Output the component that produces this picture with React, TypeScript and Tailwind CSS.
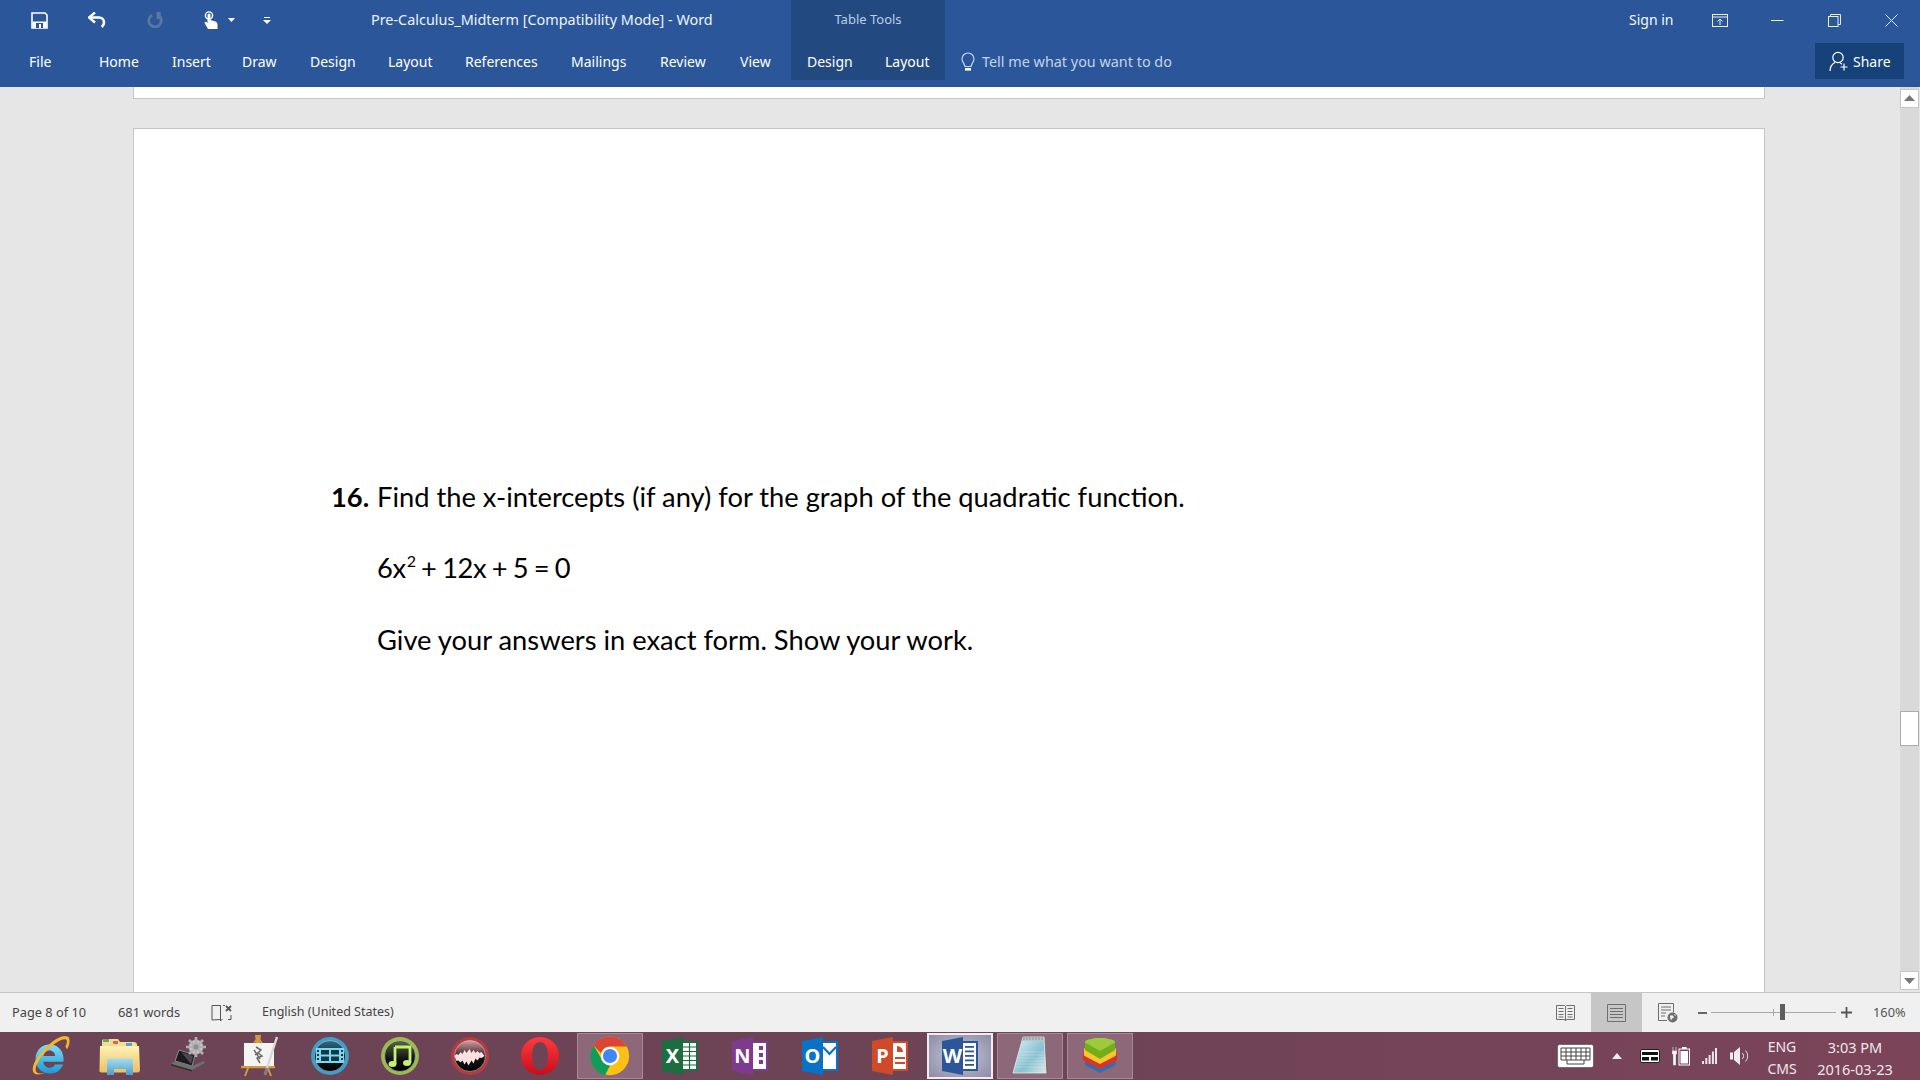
import React from "react";

const ui = "font-['Noto_Sans','Open_Sans',sans-serif]";

function SaveIcon() {
  return (
    <svg width="17" height="17" viewBox="0 0 17 17">
      <path d="M1 1h13l2 2v13H1z" fill="none" stroke="#fff" strokeWidth="1.6" />
      <rect x="1.500" y="9.500" width="14" height="6" fill="#fff" />
      <rect x="5" y="11" width="7" height="5" fill="#2b579a" />
      <rect x="8" y="12" width="2" height="4" fill="#fff" />
    </svg>
  );
}
function UndoIcon({ color = "#fff" }: { color?: string }) {
  return (
    <svg width="18" height="16" viewBox="0 0 18 16">
      <path d="M1.500 5.500H11a5 5 0 0 1 5 5c0 2-1 3.400-2.200 4.500" fill="none" stroke={color} strokeWidth="2.600" />
      <path d="M7 0.500 1 5.500l6 5" fill="none" stroke={color} strokeWidth="2.400" />
    </svg>
  );
}
function RedoIcon() {
  return (
    <svg width="17" height="16" viewBox="0 0 17 16">
      <path d="M5 3.200a6.200 6.200 0 1 0 6.500.3" fill="none" stroke="#58789f" strokeWidth="2.800" />
      <path d="M9.600 0v7h4V0z" fill="#58789f" />
    </svg>
  );
}
function TouchIcon() {
  return (
    <svg width="14" height="18" viewBox="0 0 14 18">
      <circle cx="5" cy="4.500" r="3.600" fill="none" stroke="#fff" strokeWidth="1.400" />
      <path d="M3.500 4a1.500 1.500 0 0 1 3 0v5l5 1.600c1.200.6 2 1.500 2 3V18H4L0.800 12.500c-.6-1.200.8-2.200 1.800-1.300l.9 1z" fill="#fff" />
    </svg>
  );
}

function BulbIcon() {
  return (
    <svg width="14" height="20" viewBox="0 0 14 20">
      <path d="M7 1a6 6 0 0 0-6 6c0 3 2.400 4.200 3 7.500h6c.6-3.300 3-4.500 3-7.500a6 6 0 0 0-6-6z" fill="none" stroke="#cfdcef" strokeWidth="1.100" />
      <rect x="4" y="16" width="6" height="2.600" fill="#fff" />
    </svg>
  );
}
function RibbonDisplayIcon() {
  return (
    <svg width="16" height="13" viewBox="0 0 16 13">
      <rect x="0.500" y="0.500" width="15" height="12" fill="none" stroke="#e8eef7" />
      <path d="M1 3h14" stroke="#e8eef7" />
      <path d="M8 11V5M5.500 7.500 8 5l2.500 2.500" fill="none" stroke="#e8eef7" />
    </svg>
  );
}
function WindowIcons() {
  return (
    <div className="flex items-center">
      <div className="w-[57px] flex justify-start">
        <svg width="13" height="13" viewBox="0 0 13 13"><path d="M0 6.500h12.500" stroke="#e8eef7" /></svg>
      </div>
      <div className="w-[57px] flex justify-start">
        <svg width="13" height="13" viewBox="0 0 13 13">
          <rect x="0.500" y="2.500" width="9.500" height="10" fill="none" stroke="#e8eef7" />
          <path d="M2.500 2.500v-2h10v10h-2.500" fill="none" stroke="#e8eef7" />
        </svg>
      </div>
      <div className="w-[36px] flex justify-start">
        <svg width="13" height="13" viewBox="0 0 13 13"><path d="M0.500 0.500l12 12M12.500 0.500l-12 12" stroke="#e8eef7" /></svg>
      </div>
    </div>
  );
}
function ShareIcon() {
  return (
    <svg width="20" height="20" viewBox="0 0 20 20">
      <circle cx="9" cy="6.500" r="5.200" fill="none" stroke="#fff" strokeWidth="1.200" />
      <path d="M1 20c0-4.500 2.400-7.300 5.200-8.800M11 12c.6.3 1.300.7 1.900 1.200" fill="none" stroke="#fff" strokeWidth="1.200" />
      <path d="M15 12.500v7M11.500 16h7" stroke="#fff" strokeWidth="1.200" />
    </svg>
  );
}

function IE() {
  return (
    <svg width="42" height="42" viewBox="0 0 42 42">
      <defs>
        <linearGradient id="ieb" x1="0" y1="0" x2="0" y2="1">
          <stop offset="0" stopColor="#7fdcf8" />
          <stop offset="1" stopColor="#1b9ad6" />
        </linearGradient>
      </defs>
      <path d="M21 9.500c-8.500 0-14.500 6-14.500 14.500S12.800 38.500 21 38.500c6.400 0 11-3.300 13-9H26c-1.200 2.300-3 3.300-5.200 3.300-3.700 0-6.200-2.400-6.500-6H34.500c.9-9.800-4.700-17.300-13.500-17.300zM14.500 21c.5-3.400 3-5.600 6-5.600 3.300 0 5.400 2.200 5.700 5.600z" fill="url(#ieb)" />
      <path d="M38 1.500c-3-1.800-10 .8-18 8C9 19 1 32 4.500 37.500 6 40 10.500 40.200 16 37.800 11 39 8 38.600 7 36.500 5 31.500 12 20.500 21 12.500c7-6.200 13.500-9.400 16-8 1.500 1 1 3.500-.5 7l1.500 3c3-5 3.400-11 1-13z" fill="#f1b92c" />
    </svg>
  );
}
function Folder() {
  return (
    <svg width="42" height="40" viewBox="0 0 42 40">
      <defs>
        <linearGradient id="fold" x1="0" y1="0" x2="0" y2="1">
          <stop offset="0" stopColor="#fff1b4" />
          <stop offset="1" stopColor="#e8c163" />
        </linearGradient>
        <linearGradient id="foldb" x1="0" y1="0" x2="0" y2="1">
          <stop offset="0" stopColor="#a6dcf0" />
          <stop offset="1" stopColor="#4e9fcf" />
        </linearGradient>
      </defs>
      <path d="M3 5c0-1 .8-2 2-2h14l2 3h14c1.500 0 3 1 3 2.500V34H3z" fill="#f5dc92" />
      <rect x="4" y="3" width="6" height="3" fill="#5cb05c" />
      <rect x="14" y="5" width="5" height="3" fill="#d96a4a" />
      <rect x="27" y="7" width="6" height="3" fill="#5aa0d8" />
      <path d="M1 10h39l1 24c0 1.500-1 2.500-2.500 2.500h-36C1 36.500 0 35.500 0.500 34z" fill="url(#fold)" />
      <path d="M8 25c0-1.500 1-2.500 2.500-2.500h21c1.500 0 2.500 1 2.500 2.500v14H27v-6H15v6H8z" fill="url(#foldb)" />
    </svg>
  );
}
function Laptop() {
  return (
    <svg width="40" height="38" viewBox="0 0 40 38">
      <path d="M9 13 25 18l-3 11L5 24z" fill="#1c1c1f" stroke="#8a8a8a" />
      <path d="M11 15l12 4-2 8z" fill="#4a4a55" />
      <path d="M5 24 22 29l12-5 1 2-13 7L1 27z" fill="#707070" />
      <path d="M1 27l21 6v1.500L1 28.500z" fill="#2e2e2e" />
      <g fill="#c9c9c9" stroke="#b0b0b0">
        <circle cx="26" cy="10" r="7" />
        <path d="M26 0v20M16 10h20M19 3l14 14M33 3 19 17" strokeWidth="2.600" />
      </g>
      <circle cx="26" cy="10" r="2.500" fill="#8f8f8f" />
    </svg>
  );
}
function Easel() {
  return (
    <svg width="40" height="42" viewBox="0 0 40 42">
      <path d="M16 0h4l-1 8h-2zM10 28 5 41M26 28l5 13" stroke="#d39a3e" strokeWidth="2" fill="#d39a3e" />
      <path d="M18 3 14 8M18 3l4 5" stroke="#d39a3e" strokeWidth="1.800" fill="none" />
      <path d="M1 32h34" stroke="#d39a3e" strokeWidth="2.500" />
      <rect x="4" y="8" width="30" height="23" fill="#f4f4f2" />
      <path d="M16 12l5 3-3 3 4 3-5 2 3 5M14 15l6 9M15 20l4-3" stroke="#6a6a6a" strokeWidth="1.500" fill="none" />
      <path d="M37 2 26 36" stroke="#d8d8d8" strokeWidth="2.400" />
      <path d="M27 33l-2 7" stroke="#80808a" strokeWidth="3" />
    </svg>
  );
}
function Orb({ ring, top, id, children }: { ring: string; top: string; id: string; children: React.ReactNode }) {
  return (
    <svg width="40" height="40" viewBox="0 0 40 40">
      <defs>
        <linearGradient id={id} x1="0" y1="0" x2="0" y2="1">
          <stop offset="0" stopColor={top} />
          <stop offset="0.6" stopColor="#101214" />
          <stop offset="1" stopColor="#030303" />
        </linearGradient>
      </defs>
      <circle cx="20" cy="20" r="19" fill={ring} />
      <circle cx="20" cy="20" r="15.500" fill={`url(#${id})`} stroke="#d8dde0" strokeWidth="0.500" />
      {children}
    </svg>
  );
}
function Film() {
  return (
    <Orb ring="#3c9fc8" top="#2f6f8a" id="orb1">
      <path d="M6 12h28v15H6z" fill="#79d8f2" />
      <path d="M11 14h8v4.500h-8zM21 14h8v4.500h-8zM11 20.500h8V25h-8zM21 20.500h8V25h-8z" fill="#123844" />
      <path d="M7 14h2v2H7zM7 18h2v2H7zM7 22h2v2H7zM31 14h2v2h-2zM31 18h2v2h-2zM31 22h2v2h-2z" fill="#123844" />
    </Orb>
  );
}
function Music() {
  return (
    <Orb ring="#9aba52" top="#5a6a3a" id="orb2">
      <path d="M15 11h15v16" fill="none" stroke="#c8ee72" strokeWidth="2.800" />
      <path d="M15 11v17" stroke="#c8ee72" strokeWidth="2.800" />
      <ellipse cx="12.500" cy="28" rx="4" ry="3" fill="#c8ee72" />
      <ellipse cx="27" cy="27" rx="4" ry="3" fill="#c8ee72" />
    </Orb>
  );
}
function Wave() {
  return (
    <Orb ring="#b83a3f" top="#d99aa0" id="orb3">
      <path d="M4.500 20l2-2 2 1 2-3 2 2 2-4 2 3 3-4 2 4 2-3 2 3 2-2 2 2 2-1 3 4-3 2-2-.500-2 3-2-2-2 5-2-3-3 5-2-4-2 3-2-4-2 2-2-2-2 .500z" fill="#ffdfe0" />
    </Orb>
  );
}
function Opera() {
  return (
    <svg width="40" height="40" viewBox="0 0 40 40">
      <defs>
        <linearGradient id="op" x1="0" y1="0" x2="0" y2="1">
          <stop offset="0" stopColor="#ff3a3f" />
          <stop offset="1" stopColor="#c80d1a" />
        </linearGradient>
      </defs>
      <path fillRule="evenodd" d="M20 1c11 0 19 8.500 19 19s-8 19-19 19S1 30.500 1 20 9 1 20 1zm0 5c-5.500 0-8 6.500-8 14s2.500 14 8 14 8-6.500 8-14-2.500-14-8-14z" fill="url(#op)" />
    </svg>
  );
}
function Chrome() {
  return (
    <svg width="40" height="40" viewBox="0 0 48 48">
      <circle cx="24" cy="24" r="23" fill="#fbc116" />
      <path d="M24 1a23 23 0 0 1 20 11.500H24a11.500 11.500 0 0 0-11 8L4.500 11.500A23 23 0 0 1 24 1z" fill="#db4437" />
      <path d="M4.500 11.500 14 28a11.500 11.500 0 0 0 10 7.500L18 47A23 23 0 0 1 4.500 11.500z" fill="#0f9d58" />
      <circle cx="24" cy="24" r="11" fill="#fff" />
      <circle cx="24" cy="24" r="8.500" fill="#4285f4" />
    </svg>
  );
}
function OfficeIcon({ letter, dark, children }: { letter: string; dark: string; children: React.ReactNode }) {
  return (
    <div className="relative w-[36px] h-[40px]">
      <svg width="36" height="40" viewBox="0 0 36 40" className="absolute inset-0">
        <rect x="19" y="5" width="17" height="30" fill={dark} />
        <rect x="21" y="7" width="13" height="26" fill="#fff" />
        {children}
        <path d="M0 5 21 1v38L0 35z" fill={dark} />
      </svg>
      <span className="absolute left-0 top-[7px] w-[21px] text-center text-[20px] leading-[26px] font-bold text-white font-['Noto_Sans',sans-serif]">{letter}</span>
    </div>
  );
}
function Notepad() {
  return (
    <svg width="38" height="42" viewBox="0 0 38 42">
      <defs>
        <linearGradient id="np" x1="0" y1="0" x2="1" y2="1">
          <stop offset="0" stopColor="#e4f4f8" />
          <stop offset="0.6" stopColor="#86c0d0" />
          <stop offset="1" stopColor="#dceaec" />
        </linearGradient>
      </defs>
      <path d="M33 3l4 32-2 3z" fill="#7a6a4e" />
      <path d="M12 2h21l2 36H2z" fill="url(#np)" stroke="#e4eef0" strokeWidth="0.800" />
      <path d="M12 2h21l.4 4H10.500z" fill="#b8c6c8" />
      <path d="M13 2v3M16 2v3M19 2v3M22 2v3M25 2v3M28 2v3M31 2v3" stroke="#7e8c8e" strokeWidth="0.800" />
      <path d="M9 17h24M7.500 20h26M6 23h28M5 26h29M4 29h30M3.500 32h31" stroke="#fff" strokeOpacity="0.250" />
    </svg>
  );
}
function Bluestacks() {
  return (
    <svg width="38" height="36" viewBox="0 0 38 36">
      <path d="M4 20c0-1 .5-1.500 1.500-2L19 11l14 7c1 .5 1.500 1 1.500 2v6c0 1-.5 1.500-1.500 2l-14 7-13.500-7C4.500 27.500 4 27 4 26z" fill="#2f6db4" />
      <path d="M2 15.500c0-1 .5-1.500 1.500-2L19 6l15 7.500c1 .5 2 1 2 2v6c0 1-.5 1.500-1.500 2L19 31 3.500 23.500C2.500 23 2 22.500 2 21.500z" fill="#d8332c" />
      <path d="M3 11.500c0-1 .5-1.500 1.500-2L19 3l14.500 6.500c1 .5 1.500 1 1.500 2v5c0 1-.5 1.500-1.500 2L19 26 4.500 18.500C3.500 18 3 17.500 3 16.500z" fill="#f7c82c" />
      <path d="M4 4.500C4 3 5 2.500 6 2l9-2h8l9 2c1 .5 2 1 2 2.500V11c0 1-.5 1.500-1.500 2L19 21 5.500 13C4.500 12.500 4 12 4 11z" fill="#74ad1c" />
      <path d="M4 4.500C4 3 5 2.500 6 2l9-2h8l9 2c1 .5 2 1 2 2.500L19 13z" fill="#9bcb3c" />
    </svg>
  );
}

const excelLines = (
  <g fill="none" stroke="#17693d" strokeWidth="1.200">
    <path d="M21 11h13M21 15.500h13M21 20h13M21 24.500h13M21 29h13M27.500 7v26" />
  </g>
);
const oneLines = (
  <g fill="#7e3a8c">
    <rect x="27" y="10" width="4" height="4" />
    <rect x="27" y="17" width="4" height="4" />
    <rect x="27" y="24" width="4" height="4" />
  </g>
);
const outLines = <path d="M21 11l6.500 7L34 11" fill="none" stroke="#0a72c6" strokeWidth="2.200" />;
const pptLines = (
  <g fill="#cf4a28">
    <path d="M25 10v6h6a6 6 0 0 0-6-6z" />
    <rect x="23" y="21" width="10" height="2" />
    <rect x="23" y="26" width="10" height="2" />
  </g>
);
const wordLines = (
  <g fill="#2b579a">
    <rect x="23" y="10" width="9" height="1.800" />
    <rect x="23" y="14.500" width="9" height="1.800" />
    <rect x="23" y="19" width="9" height="1.800" />
    <rect x="23" y="23.500" width="9" height="1.800" />
    <rect x="23" y="28" width="9" height="1.800" />
  </g>
);

type Task = { node: React.ReactNode; state?: "open" | "active" };
const tasks: Task[] = [
  { node: <IE /> },
  { node: <Folder /> },
  { node: <Laptop /> },
  { node: <Easel /> },
  { node: <Film /> },
  { node: <Music /> },
  { node: <Wave /> },
  { node: <Opera /> },
  { node: <Chrome />, state: "open" },
  { node: <OfficeIcon letter="X" dark="#1c6d40">{excelLines}</OfficeIcon> },
  { node: <OfficeIcon letter="N" dark="#7e3a8c">{oneLines}</OfficeIcon> },
  { node: <OfficeIcon letter="O" dark="#0a72c6">{outLines}</OfficeIcon> },
  { node: <OfficeIcon letter="P" dark="#cf4a28">{pptLines}</OfficeIcon> },
  { node: <OfficeIcon letter="W" dark="#2b579a">{wordLines}</OfficeIcon>, state: "active" },
  { node: <Notepad />, state: "open" },
  { node: <Bluestacks />, state: "open" },
];

const mainTabs: [string, string][] = [
  ["File", "w-[70px]"],
  ["Home", "w-[73px]"],
  ["Insert", "w-[70px]"],
  ["Draw", "w-[68px]"],
  ["Design", "w-[78px]"],
  ["Layout", "w-[77px]"],
  ["References", "w-[106px]"],
  ["Mailings", "w-[89px]"],
  ["Review", "w-[80px]"],
  ["View", "w-[50px]"],
];

export default function App() {
  return (
    <div className={`${ui} w-[1920px] h-[1080px] overflow-hidden flex flex-col bg-[#e6e6e6]`}>
      {/* Ribbon */}
      <header className="h-[87px] shrink-0 bg-[#2b579a] text-white flex text-[14px]">
        <div className="w-[791px] shrink-0 flex flex-col">
          <div className="h-[40px] flex items-center pl-[31px]">
            <div className="w-[57px]"><SaveIcon /></div>
            <div className="w-[59px]"><UndoIcon /></div>
            <div className="w-[57px]"><RedoIcon /></div>
            <div className="w-[24px]"><TouchIcon /></div>
            <div className="w-[35px]">
              <svg width="7" height="4" viewBox="0 0 7 4"><path d="M0 0h7L3.500 4z" fill="#fff" /></svg>
            </div>
            <div className="w-[108px]">
              <svg width="8" height="7" viewBox="0 0 8 7"><path d="M1 0h6v1H1zM0 3h8L4 7z" fill="#fff" /></svg>
            </div>
            <span className="text-[#eef3fa] text-[14.400px] whitespace-nowrap">Pre-Calculus_Midterm [Compatibility Mode] - Word</span>
          </div>
          <nav className="h-[41px] flex items-center pl-[29px] pt-[2px]">
            {mainTabs.map(([t, w]) => (
              <span key={t} className={w}>{t}</span>
            ))}
          </nav>
        </div>
        <div className="w-[154px] h-[80px] shrink-0 bg-[#234a80] flex flex-col">
          <div className="h-[40px] flex items-center justify-center text-[13px] text-[#bccfe8]">Table Tools</div>
          <div className="h-[40px] flex items-center pl-[16px] pt-[2px]">
            <span className="w-[78px]">Design</span>
            <span>Layout</span>
          </div>
        </div>
        <div className="flex-1 flex flex-col">
          <div className="h-[40px] flex items-center pl-[684px]">
            <span className="w-[83px] -mt-[2px] text-[#f4f7fb]">Sign in</span>
            <div className="w-[59px]"><RibbonDisplayIcon /></div>
            <WindowIcons />
          </div>
          <div className="h-[47px] flex items-start">
            <div className="h-[41px] flex items-center pl-[16px] w-[870px] shrink-0 pt-[2px]">
              <BulbIcon />
              <span className="ml-[7px] text-[14.400px] text-[#c3d3ea]">Tell me what you want to do</span>
            </div>
            <div className="mt-[3px] w-[89px] h-[36px] bg-[#164279] flex items-center pl-[14px] gap-[4px]">
              <ShareIcon />
              <span>Share</span>
            </div>
          </div>
        </div>
      </header>

      {/* Document area */}
      <main className="h-[905px] shrink-0 flex overflow-hidden">
        <div className="w-[1900px] shrink-0 pl-[133px] flex flex-col overflow-hidden">
          <div className="w-[1632px] h-[12px] shrink-0 bg-white border-x border-b border-[#c6c6c6]" />
          <div className="mt-[29px] w-[1632px] h-[900px] shrink-0 bg-white border border-[#c6c6c6] pt-[350px] pl-[197px] text-black font-['Lato',sans-serif] text-[27.300px] leading-[36px]">
            <p className="flex">
              <b className="w-[46px]">16.</b>
              <span>Find the x-intercepts (if any) for the graph of the quadratic function.</span>
            </p>
            <p className="mt-[35px] pl-[46px] tracking-[-0.400px] [word-spacing:-1px]">
              6x<sup className="text-[16px] leading-none relative -top-[11px] ml-[1px]">2</sup> + 12x + 5 = 0
            </p>
            <p className="mt-[36px] pl-[46px]">Give your answers in exact form. Show your work.</p>
          </div>
        </div>
        <div className="w-[19px] shrink-0 bg-[#d9d9d9] flex flex-col pt-[2px] h-[903px]">
          <div className="h-[19px] bg-white border border-[#c6c6c6] flex items-center justify-center">
            <svg width="11" height="6" viewBox="0 0 11 6"><path d="M5.500 0 11 6H0z" fill="#777" /></svg>
          </div>
          <div className="mt-[603px] h-[36px] bg-white border border-[#ababab]" />
          <div className="mt-[225px] h-[19px] bg-white border border-[#c6c6c6] flex items-center justify-center">
            <svg width="11" height="6" viewBox="0 0 11 6"><path d="M5.500 6 11 0H0z" fill="#777" /></svg>
          </div>
        </div>
      </main>

      {/* Status bar */}
      <footer className="h-[40px] shrink-0 bg-[#f0f0f0] border-t border-[#c6c6c6] flex items-center text-[12.800px] text-[#444]">
        <span className="ml-[12px] w-[106px]">Page 8 of 10</span>
        <span className="w-[93px]">681 words</span>
        <svg width="22" height="18" viewBox="0 0 22 18" className="w-[22px]">
          <path d="M1 1.500h8.500v14l-8.500 .500zM9.500 1.500v15.500M9.500 16.500l2-1M12 1.500h2M17 15.500h3V11" fill="none" stroke="#555" />
          <path d="M15 2l5 5M20 2l-5 5" stroke="#555" strokeWidth="1.800" />
        </svg>
        <span className="ml-[29px] w-[1294px] text-[12.500px]">English (United States)</span>
        <div className="w-[20px] flex">
          <svg width="19" height="18" viewBox="0 0 19 18">
            <path d="M.5 1.500h8l1 1 1-1h8v14h-8l-1 1.500-1-1.500h-8zM9.500 2.500v14M2.500 4.500h5M2.500 7.500h5M2.500 10.500h5M2.500 13h5M11.500 4.500h5M11.500 7.500h5M11.500 10.500h5M11.500 13h5" fill="none" stroke="#6e6e6e" />
          </svg>
        </div>
        <div className="ml-[15px] w-[51px] h-[39px] bg-[#c6c6c6] flex items-center justify-center">
          <svg width="19" height="18" viewBox="0 0 19 18">
            <path d="M.5.500h18v17H.5zM3 4.500h13M3 7.500h13M3 10.500h13M3 13.500h13" fill="none" stroke="#6e6e6e" />
          </svg>
        </div>
        <div className="ml-[16px] w-[40px]">
          <svg width="20" height="20" viewBox="0 0 20 20">
            <path d="M9 17.500H.5V.500h15v9M3 4h10M3 7h10M3 10h5M3 13h4" fill="none" stroke="#6e6e6e" />
            <circle cx="14.500" cy="14.500" r="5" fill="#6e6e6e" />
            <path d="M12 12.500h3l1 2-2 1-1 2-1-3zM16 11l2 1-1 1z" fill="#f0f0f0" />
          </svg>
        </div>
        <span className="w-[9px] h-[2px] bg-[#666]" />
        <div className="ml-[4px] w-[125px] h-[1px] bg-[#a8a8a8] relative">
          <span className="absolute left-[62px] -top-[3px] w-[1px] h-[7px] bg-[#a8a8a8]" />
          <span className="absolute left-[69px] -top-[8px] w-[5px] h-[16px] bg-[#5e5e5e]" />
        </div>
        <div className="ml-[5px] w-[32px]">
          <svg width="11" height="11" viewBox="0 0 11 11"><path d="M5.500 0v11M0 5.500h11" stroke="#555" strokeWidth="1.800" /></svg>
        </div>
        <span className="text-[12.800px] text-[#555]">160%</span>
      </footer>

      {/* Taskbar */}
      <div className="h-[48px] shrink-0 bg-gradient-to-r from-[#6d4356] via-[#6d4356] to-[#7b4459] flex items-center pl-[15px] text-[#f1e8ec]">
        {tasks.map((t, i) => (
          <div key={i} className="w-[70px] h-[48px] px-[2px] py-[1px]">
            <div
              className={
                t.state === "active"
                  ? "w-[66px] h-[46px] border-2 border-[#f2eef0] bg-[radial-gradient(ellipse_at_center,#c4c8d8,#8e8aa6)] flex items-center justify-center"
                  : t.state === "open"
                    ? "w-[66px] h-[46px] border border-[#a78a98] bg-[#8d6878] flex items-center justify-center"
                    : "w-[66px] h-[46px] flex items-center justify-center"
              }
            >
              {t.node}
            </div>
          </div>
        ))}
        <div className="ml-[422px] flex items-center">
          <svg width="37" height="24" viewBox="0 0 37 24">
            <rect x="0.500" y="0.500" width="36" height="23" rx="2" fill="#fff" stroke="#333" strokeWidth="0.500" />
            <g fill="none" stroke="#444"><path d="M4 4h29v12H4zM4 8h29M4 12h29M9 4v12M14 4v12M19 4v12M24 4v12M29 4v12M10 16v4h17v-4" /></g>
          </svg>
          <svg width="10" height="6" viewBox="0 0 10 6" className="ml-[18px]"><path d="M5 0l5 6H0z" fill="#f2eaee" /></svg>
          <svg width="20" height="14" viewBox="0 0 20 14" className="ml-[18px]">
            <rect x="0.500" y="0.500" width="19" height="13" rx="1.500" fill="#fff" stroke="#222" />
            <path d="M2 3h16v3H2zM2 8h7v3.500H2zM11 8h7v3.500h-7z" fill="#111" />
          </svg>
          <svg width="18" height="20" viewBox="0 0 18 20" className="ml-[12px]">
            <path d="M1 1v4M4 1v4M.500 5h4v3h-1v11h-2V8h-1z" fill="#fff" stroke="#fff" strokeWidth="0.600" />
            <rect x="7" y="3" width="10.500" height="16" fill="none" stroke="#fff" />
            <rect x="8.500" y="5" width="7.500" height="12.500" fill="#fff" />
            <rect x="10" y="1" width="4.500" height="2" fill="#fff" />
          </svg>
          <svg width="15" height="16" viewBox="0 0 15 16" className="ml-[12px]">
            <path d="M0 13h2v3H0zM3.300 10h2v6h-2zM6.600 7h2v9h-2zM9.900 3.500h2V16h-2zM13 0h2v16h-2z" fill="#efe6ea" />
          </svg>
          <svg width="20" height="20" viewBox="0 0 20 20" className="ml-[13px]">
            <path d="M0 6.500h3v7H0zM4 6l6-5v18l-6-5z" fill="#f2eaee" />
            <path d="M12.500 7a4.500 4.500 0 0 1 0 6M15.500 4.500a8 8 0 0 1 0 11" fill="none" stroke="#e2d4da" />
          </svg>
          <div className="ml-[8px] w-[48px] flex flex-col items-center text-[14px] leading-[22px] pt-[4px]">
            <span>ENG</span>
            <span>CMS</span>
          </div>
          <div className="ml-[4px] w-[90px] flex flex-col items-center text-[14.500px] leading-[22px] whitespace-nowrap pt-[4px]">
            <span>3:03 PM</span>
            <span>2016-03-23</span>
          </div>
        </div>
      </div>
    </div>
  );
}
